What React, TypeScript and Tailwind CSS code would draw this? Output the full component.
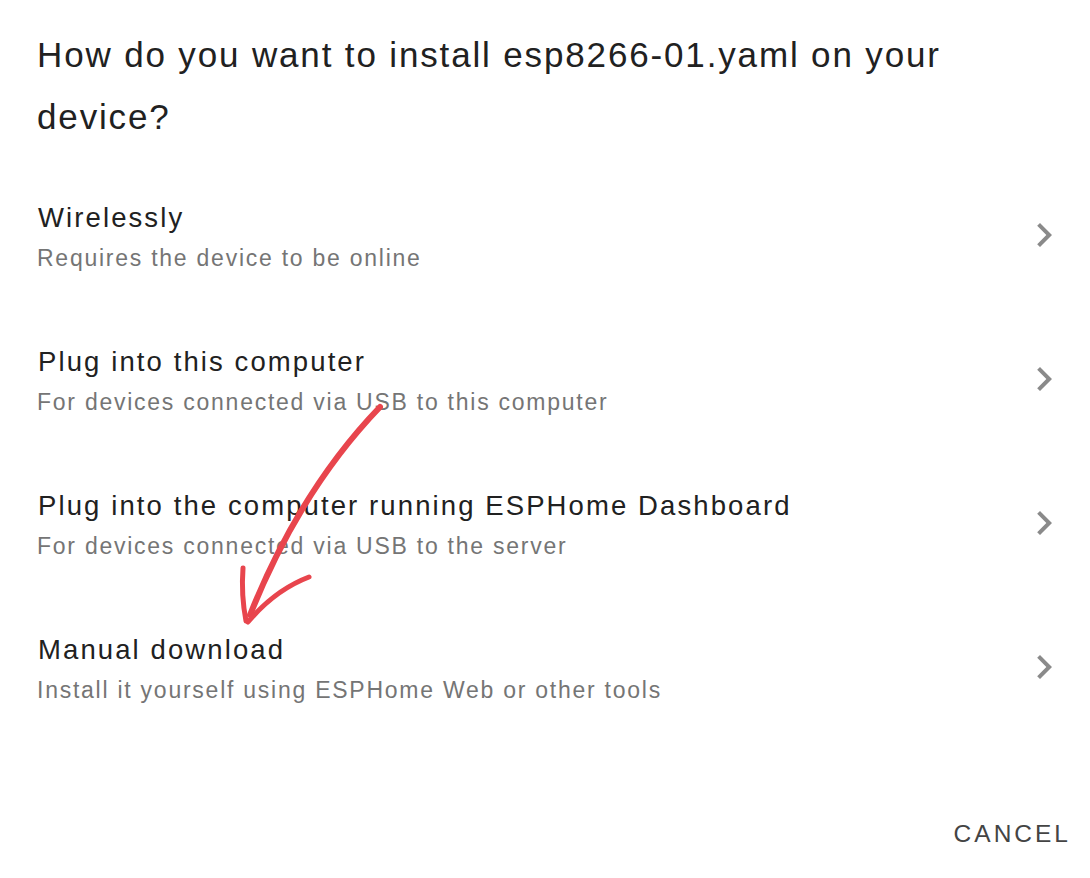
import React from "react";

const rows = [
  { t: "Wirelessly", s: "Requires the device to be online" },
  { t: "Plug into this computer", s: "For devices connected via USB to this computer" },
  { t: "Plug into the computer running ESPHome Dashboard", s: "For devices connected via USB to the server" },
  { t: "Manual download", s: "Install it yourself using ESPHome Web or other tools" },
];

function Chevron() {
  return (
    <svg width="48" height="48" viewBox="0 0 24 24" className="shrink-0">
      <path d="M10 6L8.59 7.41 13.17 12l-4.58 4.59L10 18l6-6z" fill="#8a8a8a" />
    </svg>
  );
}

export default function App() {
  return (
    <div
      className="relative w-[1090px] h-[878px] bg-white overflow-hidden"
      style={{ fontFamily: '"Liberation Sans", Arial, sans-serif' }}
    >
      <div className="pt-[24px] pl-[37px] pr-[22px]">
        <h1 className="max-w-[960px] text-[35px] leading-[62px] tracking-[1.85px] text-[#212121] font-normal">
          How do you want to install esp8266-01.yaml on your device?
        </h1>
      </div>
      <div className="mt-[18px] flex flex-col">
        {rows.map((r) => (
          <div key={r.t} className="flex items-center justify-between pl-[37px] pr-[22px] py-[32px]">
            <div className="flex flex-col">
              <div className="text-[27.5px] leading-[40px] tracking-[2.1px] text-[#212121] pl-[1px]">{r.t}</div>
              <div className="text-[23px] leading-[40px] tracking-[1.75px] text-[#757575]">{r.s}</div>
            </div>
            <div className="-mt-[6px]">
              <Chevron />
            </div>
          </div>
        ))}
      </div>
      <div className="flex justify-end pr-[19px] pt-[74px]">
        <span className="text-[24.5px] leading-[36px] tracking-[3px] text-[#444]">CANCEL</span>
      </div>
      <svg
        className="absolute left-0 top-0 pointer-events-none"
        width="1090"
        height="878"
        viewBox="0 0 1090 878"
        fill="none"
      >
        <path d="M380 407 Q 300 490 250 615" stroke="#e8454d" strokeWidth="6" strokeLinecap="round" />
        <path d="M243 568 Q 241 595 246 621" stroke="#e8454d" strokeWidth="5" strokeLinecap="round" />
        <path d="M309 577 Q 275 590 248 622" stroke="#e8454d" strokeWidth="5" strokeLinecap="round" />
      </svg>
    </div>
  );
}
